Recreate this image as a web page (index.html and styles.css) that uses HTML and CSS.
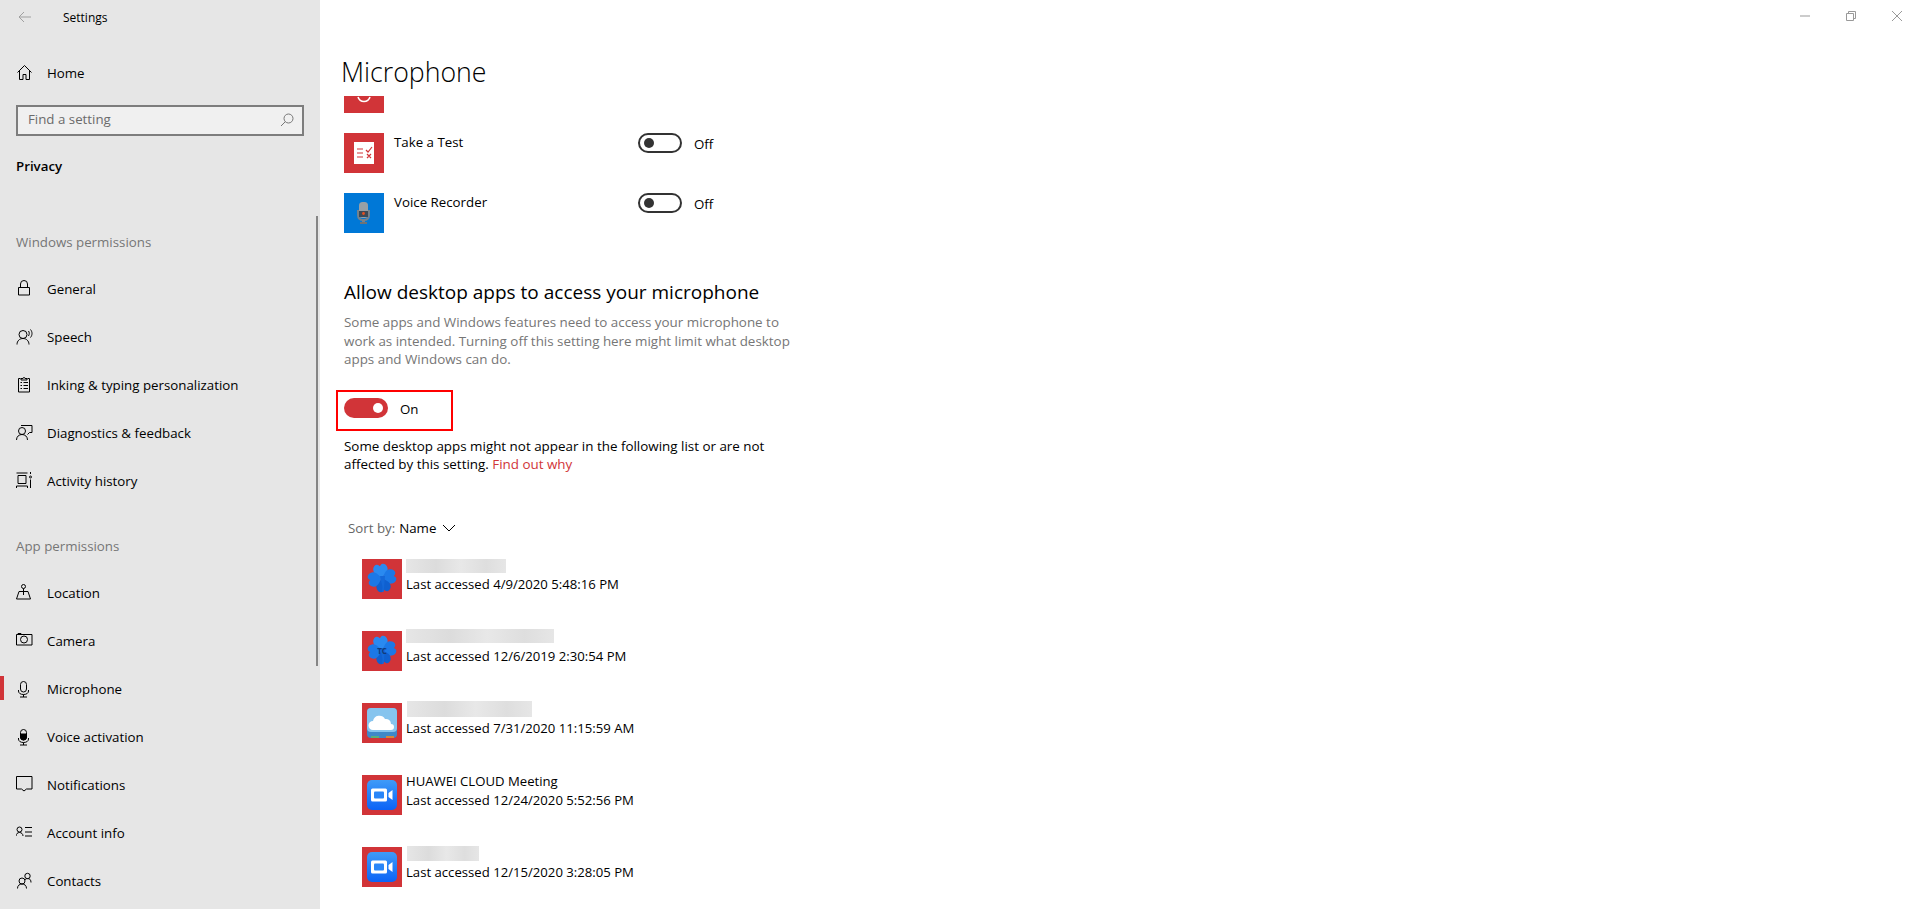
FILE: index.html
```html
<!DOCTYPE html>
<html lang="en">
<head>
    <meta charset="UTF-8">
    <title>Settings</title>
    <link rel="stylesheet" href="styles.css">
</head>
<body>
    <div class="app">
        <aside class="sidebar">
            <div class="titlebar">
                <svg class="back" width="14" height="12" viewBox="0 0 14 12"><path d="M13 6H1M6 1L1 6l5 5"/></svg>
                <span>Settings</span>
            </div>
            <a class="nav-row home">
                <svg class="icon" viewBox="0 0 18 18"><path d="M1.500 8.500l7-7 7 7M3.500 6.500V15.500H7V10.500h3V15.500h3.500V6.500"/></svg>
                Home
            </a>
            <div class="search">
                <span>Find a setting</span>
                <svg width="14" height="14" viewBox="0 0 14 14"><circle cx="8.500" cy="5.500" r="4.500"/><path d="M5.300 8.700L1 13"/></svg>
            </div>
            <div class="crumb">Privacy</div>

            <div class="group-label first">Windows permissions</div>
            <a class="nav-row">
                <svg class="icon" viewBox="0 0 18 18"><path d="M4.500 7V4a3.500 3.500 0 0 1 7 0V7M2.500 7.500h11v7.500h-11z"/></svg>
                General
            </a>
            <a class="nav-row">
                <svg class="icon" viewBox="0 0 18 18"><circle cx="7" cy="6.500" r="4"/><path d="M1 16.500c0-3.500 2.500-6 6-6s6 2.500 6 6M12.500 3c1 1.500 1 3 0 5M14.500 1.500c2 2.500 2 5.500 0 8"/></svg>
                Speech
            </a>
            <a class="nav-row">
                <svg class="icon" viewBox="0 0 18 18"><path d="M4.500 2.500H2.500v13.500h11V2.500h-2M5 4V2.500h2a1 1 0 0 1 2 0h2V4zM4.500 6.500H6M4.500 9.500H6M4.500 12.500H6M7.500 6.500h4.500M7.500 9.500h4.500M7.500 12.500h4.500"/></svg>
                Inking &amp; typing personalization
            </a>
            <a class="nav-row">
                <svg class="icon" viewBox="0 0 18 18"><circle cx="6" cy="7" r="3.500"/><path d="M.5 16c0-3.500 2.500-5.500 5.500-5.500s5.500 2 5.500 5.500M5 1.500h11v7h-2.500l-2 2"/></svg>
                Diagnostics &amp; feedback
            </a>
            <a class="nav-row">
                <svg class="icon" viewBox="0 0 18 18"><path d="M.5 1h11M.5 14h11M2 3.500h8v8H2zM.5 14v2M11.500 14v2M14.500 7.500V16M14.500 0v2"/><circle cx="14.500" cy="5" r="1"/></svg>
                Activity history
            </a>

            <div class="group-label">App permissions</div>
            <a class="nav-row">
                <svg class="icon" viewBox="0 0 18 18"><circle cx="7.500" cy="2.500" r="2"/><path d="M7.500 4.500V11M3 7.500h9l2.500 7.500H.5z"/></svg>
                Location
            </a>
            <a class="nav-row">
                <svg class="icon" viewBox="0 0 18 18"><path d="M.5 2.500h15.500v10.500H.5zM2 2.500v-1h3v1"/><circle cx="8" cy="7.500" r="3.500"/></svg>
                Camera
            </a>
            <a class="nav-row active">
                <svg class="icon" viewBox="0 0 18 18"><rect x="4.500" y="1.500" width="6" height="10.500" rx="3"/><path d="M2.500 10v1c0 2 1.800 3.500 5 3.500s5-1.500 5-3.500v-1M7.500 14.500V17M4 17h7"/></svg>
                Microphone
            </a>
            <a class="nav-row">
                <svg class="icon" viewBox="0 0 18 18"><rect x="4.500" y="1.500" width="6" height="10.500" rx="3"/><path class="solid" d="M4.500 6h6v3a3 3 0 0 1-6 0z"/><path d="M2.500 10v1c0 2 1.800 3.500 5 3.500s5-1.500 5-3.500v-1M7.500 14.500V17M4 17h7"/></svg>
                Voice activation
            </a>
            <a class="nav-row">
                <svg class="icon" viewBox="0 0 18 18"><path d="M.5 .5h15.500v12.500h-5.500l-2.500 2-2.500-2H.5z"/></svg>
                Notifications
            </a>
            <a class="nav-row">
                <svg class="icon" viewBox="0 0 18 18"><circle cx="3.500" cy="5.500" r="2.500"/><path d="M0 12c0-2 1.500-3.500 3.500-3.500S7 10 7 12M9 3.500h7M9 8h7M9 12h7"/></svg>
                Account info
            </a>
            <a class="nav-row">
                <svg class="icon" viewBox="0 0 18 18"><circle cx="6" cy="9" r="3"/><path d="M1.500 16.500c0-3 2-4.500 4.500-4.500s4.500 1.500 4.500 4.500"/><circle cx="11.500" cy="4" r="2.700"/><path d="M9 8c.5-1 1.500-1.500 2.500-1.500 2.500 0 3.500 1.500 3.500 4"/></svg>
                Contacts
            </a>
            <div class="sidebar-scroll"></div>
        </aside>

        <main class="content">
            <div class="win-controls">
                <svg width="12" height="12" viewBox="0 0 12 12"><path d="M1 6h10"/></svg>
                <svg width="12" height="12" viewBox="0 0 12 12"><path d="M1.500 3.500h7v7h-7zM3.500 3.500v-2h7v7h-2"/></svg>
                <svg width="12" height="12" viewBox="0 0 12 12"><path d="M1 1l10 10M11 1L1 11"/></svg>
            </div>

            <h1>Microphone</h1>

            <div class="tile-clip">
                <div class="tile red">
                    <svg width="40" height="40" viewBox="0 0 40 40"><path d="M14 1c2 6 10 6 12 0" fill="none" stroke="#fff" stroke-width="1.600"/></svg>
                </div>
            </div>
            <div class="store-app">
                <div class="tile red">
                    <svg width="40" height="40" viewBox="0 0 40 40">
                        <rect x="10" y="9" width="20" height="22" fill="#fff"/>
                        <path d="M13 16h6M13 20h6M13 24h6M22 17l2 2 4-5M23 21l4 4M27 21l-4 4" fill="none" stroke="#d13438" stroke-width="1.200"/>
                    </svg>
                </div>
                <div class="app-name">Take a Test</div>
                <div class="switch-wrap"><div class="switch"></div><span>Off</span></div>
            </div>
            <div class="store-app">
                <div class="tile blue">
                    <svg width="40" height="40" viewBox="0 0 40 40">
                        <path d="M14 17v5c0 3 2 5 5.500 5s5.500-2 5.500-5v-5" fill="none" stroke="#76828c" stroke-width="2"/>
                        <rect x="15" y="9" width="9" height="16" rx="3.500" fill="#98a0a6"/>
                        <rect x="15" y="18" width="9" height="6" fill="#3d4a56"/>
                        <circle cx="19.500" cy="20.500" r="1.400" fill="#e8501f"/>
                        <rect x="18" y="27" width="3" height="2" fill="#7b8288"/>
                        <rect x="16" y="29" width="7" height="2" fill="#6c7378"/>
                    </svg>
                </div>
                <div class="app-name">Voice Recorder</div>
                <div class="switch-wrap"><div class="switch"></div><span>Off</span></div>
            </div>

            <h2>Allow desktop apps to access your microphone</h2>
            <p class="desc">Some apps and Windows features need to access your microphone to<br>work as intended. Turning off this setting here might limit what desktop<br>apps and Windows can do.</p>

            <div class="switch-wrap on-row"><div class="switch on"></div><span>On</span></div>
            <div class="callout"></div>

            <p class="note">Some desktop apps might not appear in the following list or are not<br>affected by this setting. <a class="link">Find out why</a></p>

            <div class="sort">
                <span class="sort-label">Sort by:</span> <span>Name</span>
                <svg width="14" height="8" viewBox="0 0 14 8"><path d="M1 1l6 6 6-6"/></svg>
            </div>

            <div class="desktop-app">
                <div class="tile red">
                    <svg width="40" height="40" viewBox="0 0 40 40"><use href="#clover"/></svg>
                </div>
                <div class="app-text">
                    <div class="app-title"><div class="blur blur-a"></div></div>
                    <div>Last accessed 4/9/2020 5:48:16 PM</div>
                </div>
            </div>
            <div class="desktop-app">
                <div class="tile red">
                    <svg width="40" height="40" viewBox="0 0 40 40">
                        <use href="#clover"/>
                        <text x="20" y="23" class="tc">TC</text>
                    </svg>
                </div>
                <div class="app-text">
                    <div class="app-title"><div class="blur blur-b"></div></div>
                    <div>Last accessed 12/6/2019 2:30:54 PM</div>
                </div>
            </div>
            <div class="desktop-app">
                <div class="tile red">
                    <svg width="40" height="40" viewBox="0 0 40 40">
                        <rect x="5" y="5" width="30" height="30" rx="4" fill="#3f88c8"/>
                        <rect x="5" y="5" width="30" height="24" rx="4" fill="#86c4ee"/>
                        <path d="M11 27a4.500 4.500 0 0 1 0-9 6.500 6.500 0 0 1 12-2 5 5 0 0 1 6 5 3 3 0 0 1 0 6z" fill="#fff"/>
                        <rect x="9" y="33" width="8" height="2" fill="#58b07c"/>
                        <rect x="24" y="33" width="8" height="2" fill="#d8873a"/>
                    </svg>
                </div>
                <div class="app-text">
                    <div class="app-title"><div class="blur blur-c"></div></div>
                    <div>Last accessed 7/31/2020 11:15:59 AM</div>
                </div>
            </div>
            <div class="desktop-app">
                <div class="tile red">
                    <svg width="40" height="40" viewBox="0 0 40 40"><use href="#meeting"/></svg>
                </div>
                <div class="app-text">
                    <div class="app-title">HUAWEI CLOUD Meeting</div>
                    <div>Last accessed 12/24/2020 5:52:56 PM</div>
                </div>
            </div>
            <div class="desktop-app">
                <div class="tile red">
                    <svg width="40" height="40" viewBox="0 0 40 40"><use href="#meeting"/></svg>
                </div>
                <div class="app-text">
                    <div class="app-title"><div class="blur blur-d"></div></div>
                    <div>Last accessed 12/15/2020 3:28:05 PM</div>
                </div>
            </div>
        </main>
    </div>

    <svg class="defs" width="0" height="0">
        <defs>
            <linearGradient id="meetFill" x1="0" y1="0" x2="0" y2="1">
                <stop offset="0" stop-color="#3f9bf8"/>
                <stop offset="1" stop-color="#0b63f6"/>
            </linearGradient>
            <path id="lobe" d="M0 0C-3-3-9-4-9-9c0-3 3-5 5-5 2 0 3 1 4 2 1-1 2-2 4-2 2 0 5 2 5 5C9-4 3-3 0 0z"/>
            <g id="clover">
                <use href="#lobe" transform="translate(20 19) rotate(-10) scale(.8 1)" fill="#2a8af0"/>
                <use href="#lobe" transform="translate(20 19) rotate(80) scale(.8 1)" fill="#1c78e6"/>
                <use href="#lobe" transform="translate(20 19) rotate(170) scale(.8 1)" fill="#0f60d0"/>
                <use href="#lobe" transform="translate(20 19) rotate(260) scale(.8 1)" fill="#1c78e6"/>
                <path d="M18 17h5l-1 12-.500 4h-1.500l.500-5z" fill="#1468d8"/>
            </g>
            <g id="meeting">
                <rect x="5" y="5" width="30" height="30" rx="5" fill="url(#meetFill)"/>
                <path fill="#fff" d="M10.500 13.500h13a1.500 1.500 0 0 1 1.500 1.500v10a1.500 1.500 0 0 1-1.500 1.500h-13A1.500 1.500 0 0 1 9 25V15a1.500 1.500 0 0 1 1.500-1.500zM26.500 18l4-3v10l-4-3z"/>
                <rect x="12" y="16.500" width="10" height="7" rx="1" fill="#2a86f8"/>
            </g>
        </defs>
    </svg>
</body>
</html>
```

FILE: styles.css
```css
* {
    box-sizing: border-box;
}
html, body {
    margin: 0;
    height: 909px;
    overflow: hidden;
}
body {
    font-family: "Open Sans", "Noto Sans", sans-serif;
    font-size: 13.3px;
    line-height: 19px;
    color: #000;
    background: #fff;
}
.sidebar svg *, .win-controls svg *, .sort svg * {
    fill: none;
    stroke: currentColor;
    stroke-width: 1;
}
.app {
    display: flex;
    height: 909px;
}
.defs {
    position: absolute;
}

/* left nav */
.sidebar {
    position: relative;
    flex: 0 0 320px;
    background: #e6e6e6;
    height: 909px;
    overflow: hidden;
}
.titlebar {
    display: flex;
    align-items: center;
    height: 34px;
    padding-left: 18px;
    font-size: 12px;
}
.titlebar span {
    margin-left: 31px;
}
.back {
    color: #a0a0a0;
}
.nav-row {
    position: relative;
    display: flex;
    align-items: center;
    gap: 13px;
    height: 48px;
    padding-left: 16px;
}
.nav-row.home {
    margin-top: 15px;
}
.icon {
    flex: 0 0 18px;
    width: 18px;
    height: 18px;
}
.sidebar .icon .solid {
    fill: #000;
}
.nav-row.active::before {
    content: "";
    position: absolute;
    left: 0;
    top: 11px;
    width: 4px;
    height: 24px;
    background: #d13438;
}
.search {
    display: flex;
    align-items: center;
    justify-content: space-between;
    width: 288px;
    height: 31px;
    margin: 8px 0 0 16px;
    padding: 0 8px 2px 10px;
    border: 2px solid #7d7d7d;
    background: #f0f0f0;
    color: #6b6b6b;
}
.search svg {
    color: #777;
}
.crumb {
    margin: 21px 0 0 16px;
    height: 20px;
    font-weight: 600;
}
.group-label {
    height: 20px;
    margin: 32px 0 12px 16px;
    color: #767676;
}
.group-label.first {
    margin-top: 56px;
}
.sidebar-scroll {
    position: absolute;
    left: 316px;
    top: 216px;
    width: 2px;
    height: 450px;
    background: #858585;
}

/* right side */
.content {
    position: relative;
    flex: 1;
    padding-left: 24px;
}
.win-controls {
    position: absolute;
    top: 10px;
    right: 14px;
    display: flex;
    gap: 34px;
    color: #999;
}
h1 {
    margin: 50px 0 0 -3px;
    height: 46px;
    font-size: 26.7px;
    line-height: 44px;
    font-weight: 300;
}
.tile {
    flex: 0 0 40px;
    width: 40px;
    height: 40px;
}
.tile svg {
    display: block;
}
.tile.red {
    background: #d13438;
}
.tile.blue {
    background: #0078d7;
}
.tile-clip {
    height: 17px;
    width: 40px;
    overflow: hidden;
}
.tc {
    font-size: 8px;
    font-weight: 700;
    text-anchor: middle;
    fill: #123a78;
}
.store-app {
    display: flex;
    height: 40px;
    margin-top: 20px;
}
.app-name {
    width: 244px;
    margin-left: 10px;
}
.switch-wrap {
    display: flex;
    align-items: center;
    gap: 12px;
    height: 20px;
}
.switch-wrap span {
    position: relative;
    top: 1px;
}
.switch {
    position: relative;
    width: 44px;
    height: 20px;
    border: 2px solid #333;
    border-radius: 10px;
}
.switch::after {
    content: "";
    position: absolute;
    left: 4px;
    top: 3px;
    width: 10px;
    height: 10px;
    border-radius: 50%;
    background: #333;
}
.switch.on {
    border: none;
    background: #d13438;
}
.switch.on::after {
    left: 29px;
    top: 5px;
    background: #fff;
}
h2 {
    margin: 45px 0 0;
    height: 28px;
    font-size: 19px;
    line-height: 28px;
    font-weight: 400;
}
.desc {
    margin: 7px 0 0;
    font-size: 13.4px;
    line-height: 18.5px;
    color: #767676;
}
.on-row {
    margin-top: 29.5px;
}
.callout {
    position: absolute;
    left: 16px;
    top: 390px;
    width: 117px;
    height: 41px;
    border: 2px solid #f00;
}
.note {
    margin: 19px 0 0;
    font-size: 13.4px;
    line-height: 18px;
}
.link {
    color: #d13438;
}
.sort {
    display: flex;
    align-items: center;
    gap: 4px;
    height: 20px;
    margin: 45px 0 0 4px;
}
.sort svg {
    margin-left: 2px;
}
.sort-label {
    color: #666;
}
.desktop-app {
    display: flex;
    gap: 4px;
    height: 40px;
    margin: 32px 0 0 18px;
}
.sort + .desktop-app {
    margin-top: 21px;
}
.app-text {
    margin-top: -3px;
    font-size: 13.15px;
}
.app-title {
    position: relative;
    height: 19px;
}
.blur {
    position: absolute;
    background: linear-gradient(90deg, #e6e6e6, #dcdcdc 30%, #e8e8e8 55%, #dedede 80%, #e6e6e6);
}
.blur-a { width: 100px; height: 14px; top: 3px; }
.blur-b { width: 148px; height: 14px; top: 1px; }
.blur-c { width: 125px; height: 16px; top: 1px; left: 1px; }
.blur-d { width: 72px; height: 15px; top: 2px; left: 1px; }
```
